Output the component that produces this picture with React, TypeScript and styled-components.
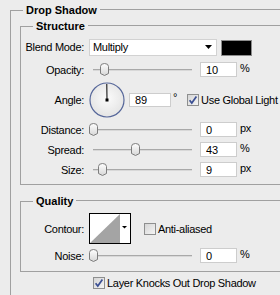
import React from "react";
import styled, { createGlobalStyle } from "styled-components";

const GlobalStyle = createGlobalStyle`
  html, body {
    margin: 0;
    padding: 0;
    background: #ececec;
    overflow: hidden;
  }
  body {
    font-family: "Liberation Sans", Arial, sans-serif;
    font-size: 11px;
    letter-spacing: -0.3px;
    color: #000;
  }
`;

const Panel = styled.div`
  width: 280px;
  height: 295px;
  overflow: hidden;
  box-sizing: border-box;
  padding: 4px 0 0 10px;
  background: #ececec;
`;

const Group = styled.div<{ $mt?: number }>`
  margin-top: ${(p) => p.$mt ?? 0}px;
  width: 320px;
`;

const Header = styled.div`
  display: flex;
  height: 12px;
`;

const Corner = styled.div`
  flex: none;
  box-sizing: border-box;
  width: 13px;
  height: 6px;
  align-self: flex-end;
  border-top: 1px solid #a0a0a0;
  border-left: 1px solid #a0a0a0;
`;

const Rule = styled.div`
  flex: 1;
  height: 6px;
  align-self: flex-end;
  border-top: 1px solid #a0a0a0;
`;

const Title = styled.span`
  font-weight: bold;
  line-height: 12px;
  letter-spacing: 0;
  padding: 0 3px;
`;

const OuterBody = styled.div`
  min-height: 300px;
  padding: 4px 0 0 9px;
  border-left: 1px solid #a0a0a0;
`;

const InnerBody = styled.div<{ $pt: number; $pb: number }>`
  padding: ${(p) => p.$pt}px 0 ${(p) => p.$pb}px 4px;
  border-left: 1px solid #a0a0a0;
  border-bottom: 1px solid #a0a0a0;
`;

const Row = styled.div<{ $h: number; $mt?: number }>`
  display: flex;
  align-items: center;
  height: ${(p) => p.$h}px;
  margin-top: ${(p) => p.$mt ?? 0}px;
  white-space: nowrap;
`;

const Label = styled.span`
  flex: none;
  width: 59px;
  margin-right: 5px;
  text-align: right;
`;

const Select = styled.div`
  flex: none;
  box-sizing: border-box;
  width: 128px;
  height: 17px;
  margin-right: 4px;
  background: #fff;
  border: 1px solid #d2d2d2;
  display: flex;
  align-items: center;
  justify-content: space-between;
  padding: 0 4px 0 3px;
`;

const Swatch = styled.div`
  flex: none;
  box-sizing: border-box;
  width: 31px;
  height: 16px;
  margin-top: 2px;
  background: #000;
  border: 1px solid #8c8c8c;
`;

const SliderBox = styled.div`
  position: relative;
  flex: none;
  width: 107px;
  height: 15px;
  margin-right: 4px;
  display: flex;
  align-items: center;
`;

const Track = styled.div`
  flex: 1;
  margin: 0 4px;
  height: 2px;
  box-sizing: border-box;
  border-top: 1px solid #a9a9a9;
  border-bottom: 1px solid #d8d8d8;
`;

const ThumbSvg = styled.svg`
  position: absolute;
  top: 1px;
`;

const Field = styled.input<{ $w: number; $h: number }>`
  flex: none;
  box-sizing: border-box;
  width: ${(p) => p.$w}px;
  height: ${(p) => p.$h}px;
  margin: 0;
  padding: 0 0 0 5px;
  border: 1px solid #cdcdcd;
  background: #fff;
  font: inherit;
  letter-spacing: 0;
  color: #000;
  outline: none;
`;

const Unit = styled.span<{ $ml?: number; $raise?: number }>`
  margin-left: ${(p) => p.$ml ?? 3}px;
  margin-bottom: ${(p) => p.$raise ?? 3}px;
`;

const CheckLabel = styled.label<{ $ml?: number }>`
  display: flex;
  align-items: center;
  gap: 2px;
  margin-left: ${(p) => p.$ml ?? 0}px;
`;

const FooterRow = styled.div`
  margin-top: 5px;
  padding-left: 73px;
  height: 12px;
  display: flex;
  align-items: center;
`;

function GroupTitle({ children }: { children: React.ReactNode }) {
  return (
    <Header>
      <Corner />
      <Title>{children}</Title>
      <Rule />
    </Header>
  );
}

function Thumb({ pos }: { pos: number }) {
  return (
    <ThumbSvg width="9" height="13" viewBox="0 0 9 13" style={{ left: pos * 99 }}>
      <defs>
        <linearGradient id="tg" x1="0" y1="0" x2="0" y2="1">
          <stop offset="0" stopColor="#ffffff" />
          <stop offset="1" stopColor="#d6d6d6" />
        </linearGradient>
      </defs>
      <path
        d="M0.5 3.5 Q0.5 0.5 4.5 0.5 Q8.5 0.5 8.5 3.5 L8.5 10.5 L4.5 12.5 L0.5 10.5 Z"
        fill="url(#tg)"
        stroke="#7d7d7d"
      />
    </ThumbSvg>
  );
}

function Slider({ pos }: { pos: number }) {
  return (
    <SliderBox>
      <Track />
      <Thumb pos={pos} />
    </SliderBox>
  );
}

function CheckBox({ checked }: { checked: boolean }) {
  return (
    <svg width="12" height="12" viewBox="0 0 12 12" style={{ flex: "none" }}>
      <defs>
        <linearGradient id="cb" x1="0" y1="0" x2="1" y2="1">
          <stop offset="0" stopColor="#d4d4d4" />
          <stop offset="1" stopColor="#f6f6f6" />
        </linearGradient>
      </defs>
      <rect x="0.5" y="0.5" width="11" height="11" fill="url(#cb)" stroke="#8e8f8f" />
      {checked && (
        <path d="M2.6 6.2 L4.8 9 L9.4 2.6" fill="none" stroke="#3b4f93" strokeWidth="1.7" />
      )}
    </svg>
  );
}

function Dial() {
  return (
    <svg width="36" height="36" viewBox="0 0 36 36" style={{ flex: "none", marginRight: 4 }}>
      <defs>
        <radialGradient id="dg" cx="0.5" cy="0.45" r="0.6">
          <stop offset="0" stopColor="#fbfbfb" />
          <stop offset="1" stopColor="#e2e2e2" />
        </radialGradient>
      </defs>
      <circle cx="18" cy="18" r="17" fill="url(#dg)" stroke="#56679a" strokeWidth="1.2" />
      <line x1="18" y1="18" x2="17.8" y2="2" stroke="#000" strokeWidth="1" />
      <rect x="16.5" y="16.5" width="3" height="3" fill="#000" />
    </svg>
  );
}

function Contour() {
  return (
    <svg width="42" height="31" viewBox="0 0 42 31" style={{ flex: "none" }}>
      <rect x="0.5" y="0.5" width="41" height="30" fill="#fff" stroke="#000" />
      <polygon points="1,30 31,1 31,30" fill="#a4a4a4" />
      <polygon points="33,13 38,13 35.5,15.5" fill="#000" />
    </svg>
  );
}

export default function App() {
  return (
    <Panel>
      <GlobalStyle />
      <Group>
        <GroupTitle>Drop Shadow</GroupTitle>
        <OuterBody>
          <Group>
            <GroupTitle>Structure</GroupTitle>
            <InnerBody $pt={6} $pb={7}>
              <Row $h={18}>
                <Label>Blend Mode:</Label>
                <Select>
                  <span>Multiply</span>
                  <svg width="7" height="4" viewBox="0 0 7 4">
                    <polygon points="0,0 7,0 3.5,4" fill="#000" />
                  </svg>
                </Select>
                <Swatch />
              </Row>

              <Row $h={15} $mt={6}>
                <Label>Opacity:</Label>
                <Slider pos={0.11} />
                <Field $w={37} $h={15} readOnly value="10" />
                <Unit>%</Unit>
              </Row>

              <Row $h={36} $mt={5}>
                <Label>Angle:</Label>
                <Dial />
                <Field $w={42} $h={14} readOnly value="89" />
                <Unit $ml={2} $raise={6}>°</Unit>
                <CheckLabel $ml={10}>
                  <CheckBox checked />
                  Use Global Light
                </CheckLabel>
              </Row>

              <Row $h={15} $mt={4}>
                <Label>Distance:</Label>
                <Slider pos={0} />
                <Field $w={37} $h={15} readOnly value="0" />
                <Unit>px</Unit>
              </Row>

              <Row $h={15} $mt={5}>
                <Label>Spread:</Label>
                <Slider pos={0.425} />
                <Field $w={37} $h={15} readOnly value="43" />
                <Unit>%</Unit>
              </Row>

              <Row $h={15} $mt={5}>
                <Label>Size:</Label>
                <Slider pos={0.09} />
                <Field $w={37} $h={15} readOnly value="9" />
                <Unit>px</Unit>
              </Row>
            </InnerBody>
          </Group>

          <Group $mt={10}>
            <GroupTitle>Quality</GroupTitle>
            <InnerBody $pt={6} $pb={8}>
              <Row $h={31}>
                <Label>Contour:</Label>
                <Contour />
                <CheckLabel $ml={13}>
                  <CheckBox checked={false} />
                  Anti-aliased
                </CheckLabel>
              </Row>

              <Row $h={15} $mt={4}>
                <Label>Noise:</Label>
                <Slider pos={0} />
                <Field $w={37} $h={15} readOnly value="0" />
                <Unit>%</Unit>
              </Row>
            </InnerBody>
          </Group>

          <FooterRow>
            <CheckLabel>
              <CheckBox checked />
              Layer Knocks Out Drop Shadow
            </CheckLabel>
          </FooterRow>
        </OuterBody>
      </Group>
    </Panel>
  );
}
